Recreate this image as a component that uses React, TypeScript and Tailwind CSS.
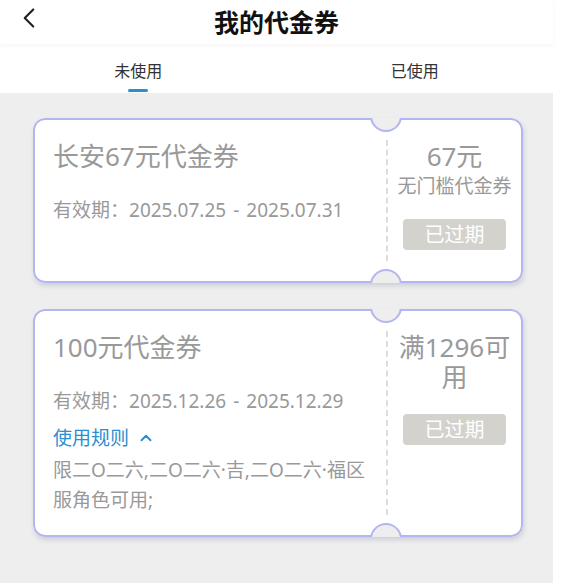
import { ChevronLeft, ChevronUp } from 'lucide-react'

const font = { fontFamily: '"Noto Sans", "Noto Sans CJK SC", sans-serif' }

interface Coupon {
  title: string
  start: string
  end: string
  amount: string
  note?: string
  rule?: string
}

const coupons: Coupon[] = [
  { title: '长安67元代金券', start: '2025.07.25', end: '2025.07.31', amount: '67元', note: '无门槛代金券' },
  {
    title: '100元代金券',
    start: '2025.12.26',
    end: '2025.12.29',
    amount: '满1296可用',
    rule: '限二O二六,二O二六·吉,二O二六·福区服角色可用;',
  },
]

function Notch({ top }: { top: boolean }) {
  return (
    <div
      className={
        'absolute left-[337px] w-8 h-8 rounded-full bg-[#eeeeee] border-2 border-[#b3b7f0] ' +
        (top ? 'top-[-18px]' : 'bottom-[-18px]')
      }
    />
  )
}

function CouponCard({ c }: { c: Coupon }) {
  return (
    <div className="relative w-[490px] overflow-hidden rounded-[12px] shadow-[1px_3px_4px_rgba(120,120,160,0.25)]">
      <div className="flex min-h-[165px] bg-white border-2 border-[#b3b7f0] rounded-[12px]">
        {/* left */}
        <div className="w-[351px] pl-[18px] pt-[20px] pb-[20px] text-[#999999]">
          <p className="text-[26px] leading-[32px]">{c.title}</p>
          <p className="mt-[23px] text-[19px] leading-[30px]">
            有效期：{c.start}
            <span className="mx-[7px]">-</span>
            {c.end}
          </p>
          {c.rule && (
            <>
              <div className="mt-[7px] flex items-center gap-2 text-[19px] leading-[30px] text-[#2a8fd0]">
                使用规则
                <ChevronUp size={18} strokeWidth={2.5} />
              </div>
              <p className="mt-[2px] w-[318px] text-[19px] leading-[30px]">{c.rule}</p>
            </>
          )}
        </div>

        {/* divider */}
        <div className="my-[20px] border-l-2 border-dashed border-[#dddddd]" />

        {/* right */}
        <div className="flex-1 flex flex-col items-center pt-[21px] px-1 text-center text-[#999999]">
          <p className="text-[26px] leading-[30px]">{c.amount}</p>
          {c.note && <p className="mt-[4px] text-[19px] leading-[22px]">{c.note}</p>}
          <div className="mt-[22px] w-[103px] h-[31px] rounded-[4px] bg-[#d4d2cd] flex items-center justify-center text-white text-[20px]">
            已过期
          </div>
        </div>
      </div>
      <Notch top />
      <Notch top={false} />
    </div>
  )
}

export default function App() {
  return (
    <div className="w-[568px] h-[583px] bg-white overflow-hidden" style={font}>
      <div className="w-[553px] h-full flex flex-col">
        {/* header */}
        <div className="relative z-10 h-[44px] flex items-center justify-center bg-white shadow-[0_2px_4px_rgba(0,0,0,0.04)]">
          <ChevronLeft size={34} strokeWidth={1.5} className="absolute left-[12px] top-[1px] text-[#222222]" />
          <h1 className="text-[25px] font-bold text-[#111111] leading-none">我的代金券</h1>
        </div>

        {/* tabs */}
        <div className="h-[49px] flex bg-white">
          <div className="flex-1 flex flex-col items-center pt-[15px]">
            <span className="text-[16px] leading-[24px] text-[#333333]">未使用</span>
            <span className="mt-[6px] w-[20px] h-[3px] rounded-full bg-[#2a8fd0]" />
          </div>
          <div className="flex-1 flex flex-col items-center pt-[15px]">
            <span className="text-[16px] leading-[24px] text-[#333333]">已使用</span>
          </div>
        </div>

        {/* list */}
        <div className="flex-1 bg-[#eeeeee] pl-[33px] pt-[25px] flex flex-col gap-[26px]">
          {coupons.map((c) => (
            <CouponCard key={c.title} c={c} />
          ))}
        </div>
      </div>
    </div>
  )
}
